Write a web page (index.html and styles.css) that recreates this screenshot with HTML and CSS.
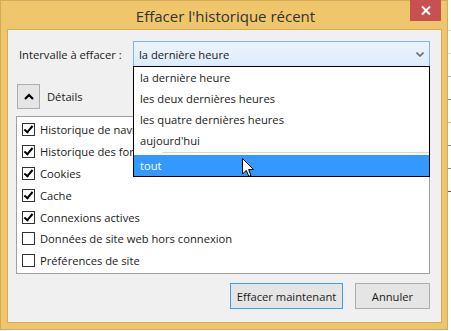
FILE: index.html
```html
<!DOCTYPE html>
<html lang="fr">
<head>
    <meta charset="UTF-8">
    <meta name="viewport" content="width=device-width, initial-scale=1.0">
    <title>Effacer l'historique récent</title>
    <link rel="stylesheet" href="styles.css">
</head>
<body>
    <div class="desktop">
        <div class="window">
            <div class="titlebar">
                <span class="title">Effacer l'historique récent</span>
                <div class="close-btn">
                    <svg width="10" height="9" viewBox="0 0 10 9">
                        <path d="M1 0.5 L9 8.5 M9 0.5 L1 8.5" stroke="#fff" stroke-width="2"/>
                    </svg>
                </div>
            </div>
            <div class="content">
                <div class="range-row">
                    <label class="range-label">Intervalle à effacer :</label>
                    <div class="combo">
                        <span class="combo-value">la dernière heure</span>
                        <svg class="combo-arrow" width="8" height="5" viewBox="0 0 8 5">
                            <path d="M0.5 0.5 L4 4 L7.5 0.5" fill="none" stroke="#6d6d6d" stroke-width="1.6"/>
                        </svg>
                        <ul class="dropdown">
                            <li>la dernière heure</li>
                            <li>les deux dernières heures</li>
                            <li>les quatre dernières heures</li>
                            <li>aujourd'hui</li>
                            <li class="separator"></li>
                            <li class="selected">tout</li>
                        </ul>
                        <svg class="cursor" width="12" height="20" viewBox="0 0 12 20">
                            <path d="M0.5 0.5 L0.5 16 L4.3 12.4 L6.8 18.3 L9 17.4 L6.6 11.6 L11.5 11.6 Z" fill="#fff" stroke="#000" stroke-width="1"/>
                        </svg>
                    </div>
                </div>

                <div class="details-row">
                    <div class="toggle-btn">
                        <svg width="10" height="7" viewBox="0 0 10 7">
                            <path d="M1 6 L5 2 L9 6" fill="none" stroke="#000" stroke-width="2.2"/>
                        </svg>
                    </div>
                    <span>Détails</span>
                </div>

                <div class="item-list">
                    <div class="item"><span class="check checked"></span>Historique de navigation et des téléchargements</div>
                    <div class="item"><span class="check checked"></span>Historique des formulaires et des recherches</div>
                    <div class="item"><span class="check checked"></span>Cookies</div>
                    <div class="item"><span class="check checked"></span>Cache</div>
                    <div class="item"><span class="check checked"></span>Connexions actives</div>
                    <div class="item"><span class="check"></span>Données de site web hors connexion</div>
                    <div class="item"><span class="check"></span>Préférences de site</div>
                </div>

                <div class="button-row">
                    <button type="button" class="btn btn-default">Effacer maintenant</button>
                    <button type="button" class="btn btn-cancel">Annuler</button>
                </div>
            </div>
        </div>
        <div class="behind">
            <span class="frag frag-gray"></span>
            <span class="frag frag-gray"></span>
            <span class="frag frag-blue"></span>
            <span class="frag frag-dark"></span>
            <span class="frag frag-orange"></span>
            <span class="frag frag-dark"></span>
            <span class="frag frag-dark"></span>
            <span class="frag frag-red"></span>
        </div>
    </div>
</body>
</html>
```

FILE: styles.css
```css
body {
    margin: 0;
    background-color: #ffffff;
    font-family: "Open Sans", "Noto Sans", sans-serif;
    font-size: 11.2px;
    color: #1b1b1b;
}
.desktop {
    display: flex;
    width: 451px;
    height: 331px;
    overflow: hidden;
}
.window {
    position: relative;
    box-sizing: border-box;
    width: 448px;
    height: 330px;
    flex-shrink: 0;
    background-color: #efc66c;
    border: 1px solid #d3aa5b;
    padding: 0 5px 6px 6px;
    display: flex;
    flex-direction: column;
}
.titlebar {
    height: 28px;
    display: flex;
    justify-content: center;
    align-items: center;
}
.title {
    font-size: 15px;
    color: #333333;
    margin-top: 2px;
    margin-left: 2px;
}
.close-btn {
    position: absolute;
    top: -1px;
    right: 6px;
    width: 31px;
    height: 21px;
    background-color: #c75050;
    display: flex;
    justify-content: center;
    align-items: center;
}
.content {
    flex: 1;
    background-color: #f0f0f0;
    border: 1px solid #d3aa5b;
    padding: 11px 11px 0 8px;
    display: flex;
    flex-direction: column;
}
.range-row {
    display: flex;
    align-items: center;
}
.range-label {
    width: 114px;
    padding-left: 3px;
}
.combo {
    position: relative;
    flex: 1;
    box-sizing: border-box;
    height: 26px;
    border: 1px solid #7eb4ea;
    background: linear-gradient(#ecf4fc, #dcecfc);
    display: flex;
    align-items: center;
    padding-left: 5px;
}
.combo-value {
    flex: 1;
}
.combo-arrow {
    margin-right: 5px;
}
.dropdown {
    position: absolute;
    top: 24px;
    left: -1px;
    right: -1px;
    margin: 0;
    padding: 0;
    list-style: none;
    background-color: #ffffff;
    border: 1px solid #000000;
    z-index: 2;
}
.dropdown li {
    height: 21px;
    line-height: 21px;
    padding-left: 6px;
}
.dropdown .separator {
    height: 1px;
    margin: 1px 0 2px 28px;
    background-color: #d7d7d7;
}
.dropdown .selected {
    background-color: #3399ff;
    color: #ffffff;
}
.cursor {
    position: absolute;
    top: 116px;
    left: 108px;
    z-index: 3;
}
.details-row {
    display: flex;
    align-items: center;
    margin-top: 17px;
    gap: 7px;
}
.toggle-btn {
    box-sizing: border-box;
    width: 23px;
    height: 25px;
    margin-left: 1px;
    border: 1px solid #acacac;
    background-color: #e5e5e5;
    display: flex;
    justify-content: center;
    align-items: center;
}
.item-list {
    margin-top: 7px;
    height: 158px;
    box-sizing: border-box;
    background-color: #ffffff;
    border: 1px solid #a0a0a0;
    padding: 2px 0 0 5px;
    overflow: hidden;
}
.item {
    height: 21.8px;
    display: flex;
    align-items: center;
    white-space: nowrap;
}
.check {
    box-sizing: border-box;
    width: 13px;
    height: 13px;
    border: 1px solid #333333;
    background-color: #ffffff;
    margin-right: 5px;
    position: relative;
    flex-shrink: 0;
}
.check.checked::after {
    content: "";
    position: absolute;
    left: 3px;
    top: 0px;
    width: 3px;
    height: 7px;
    border: solid #000000;
    border-width: 0 2px 2px 0;
    transform: rotate(40deg);
}
.button-row {
    display: flex;
    justify-content: flex-end;
    gap: 12px;
    margin-top: 9px;
}
.btn {
    box-sizing: border-box;
    height: 26px;
    font-family: inherit;
    font-size: 11.2px;
    color: #1b1b1b;
    background-color: #e5e5e5;
    border: 1px solid #acacac;
    padding: 0;
}
.btn-default {
    width: 113px;
    border-color: #3c9cfd;
}
.btn-cancel {
    width: 75px;
}
.behind {
    flex: 1;
    display: flex;
    flex-direction: column;
    padding-top: 30px;
    gap: 22px;
}
.frag {
    display: block;
    height: 1px;
}
.frag-gray { background-color: #d8d8d8; }
.frag-blue { background-color: #9dbde0; }
.frag-dark { background-color: #8a8a96; }
.frag-orange { background-color: #eab870; }
.frag-red { background-color: #a04050; }
```
